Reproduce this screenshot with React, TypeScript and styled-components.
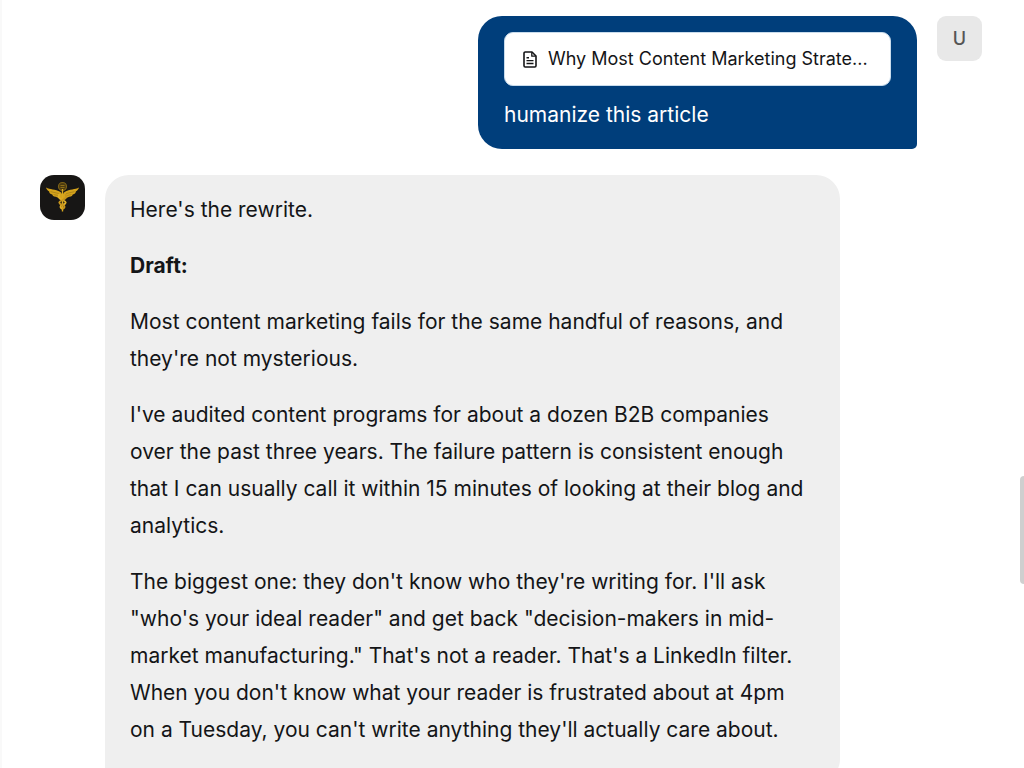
import React from "react";
import styled, { createGlobalStyle } from "styled-components";

const GlobalStyle = createGlobalStyle`
  * { box-sizing: border-box; }
  body {
    margin: 0;
    background: #ffffff;
    color: #141517;
    font-family: Inter, "Liberation Sans", sans-serif;
  }
`;

const Chat = styled.main`
  position: relative;
  display: flex;
  flex-direction: column;
  gap: 26px;
  height: 100vh;
  overflow: hidden;
  padding: 16px 42px 0 38px;
  border-left: 2px solid #f9f9f9;
`;

const Message = styled.article<{ $own?: boolean }>`
  display: flex;
  flex: none;
  align-items: flex-start;
  gap: 20px;
  flex-direction: ${(p) => (p.$own ? "row-reverse" : "row")};
`;

const Avatar = styled.div<{ $dark?: boolean }>`
  display: flex;
  flex: none;
  align-items: center;
  justify-content: center;
  width: 45px;
  height: 45px;
  border-radius: ${(p) => (p.$dark ? 14 : 9)}px;
  background: ${(p) => (p.$dark ? "#171615" : "#e8e8e8")};
  color: #555555;
  font-size: 18px;
  font-weight: 500;
`;

const Bubble = styled.div<{ $own?: boolean }>`
  max-width: ${(p) => (p.$own ? 439 : 735)}px;
  padding: 16px ${(p) => (p.$own ? 26 : 25)}px;
  border-radius: ${(p) => (p.$own ? "24px 24px 5px 24px" : "24px 24px 24px 5px")};
  background: ${(p) => (p.$own ? "#003e7b" : "#efefef")};
  color: ${(p) => (p.$own ? "#ffffff" : "inherit")};
`;

const Attachment = styled.button`
  display: flex;
  align-items: center;
  gap: 11px;
  width: 387px;
  max-width: 100%;
  height: 54px;
  margin: 0 0 10px;
  padding: 0 12px 0 18px;
  border: 1px solid #c9dcec;
  border-radius: 9px;
  background: #ffffff;
  color: #141517;
  font: inherit;
  font-size: 18px;
`;

const FileName = styled.span`
  overflow: hidden;
  line-height: 26px;
  white-space: nowrap;
  text-overflow: ellipsis;
`;

const Text = styled.p<{ $bold?: boolean }>`
  margin: 0;
  font-size: 21px;
  line-height: 37px;
  font-weight: ${(p) => (p.$bold ? 700 : 400)};
`;

const Reply = styled.div`
  display: flex;
  flex-direction: column;
  gap: 19px;
  padding-bottom: 19px;
`;

const ScrollThumb = styled.div`
  position: absolute;
  top: 62%;
  right: -4px;
  width: 8px;
  height: 108px;
  border-radius: 4px;
  background: #cfcfcf;
`;

const DocumentIcon = () => (
  <svg width="14" height="17" viewBox="0 0 14 17" fill="none" stroke="#141517" strokeWidth="1.6" strokeLinejoin="round" aria-hidden="true">
    <path d="M2.2 1H9l4 4v9.8a1.2 1.2 0 0 1-1.2 1.2H2.2A1.2 1.2 0 0 1 1 14.8V2.2A1.2 1.2 0 0 1 2.2 1Z" />
    <path d="M8.8 1.2V5.2H12.8" strokeWidth="1.3" />
    <path d="M3.5 6.7h2.5M3.5 9.6h7M3.5 12.5h7" strokeWidth="1.4" />
  </svg>
);

const Caduceus = () => (
  <svg width="45" height="45" viewBox="0 0 45 45" fill="none" aria-hidden="true">
    <path d="M6 12.500C10 15 15 13.500 20.500 17L22 19V24.500C19.500 22.500 17.500 23 16 21.800C13.500 22 12.500 20.500 12.300 19.500C10 19 9 17.500 9.200 16.500C7.500 15.700 6.500 14 6 12.500Z" fill="#d5a31c" />
    <path d="M39 12.500C35 15 30 13.500 24.500 17L23 19V24.500C25.500 22.500 27.500 23 29 21.800C31.500 22 32.500 20.500 32.700 19.500C35 19 36 17.500 35.800 16.500C37.500 15.700 38.500 14 39 12.500Z" fill="#d5a31c" />
    <path d="M10.500 16.600l8.500 2M13.500 19.600l6 1.100M34.500 16.600l-8.500 2M31.500 19.600l-6 1.100" stroke="#8d6c15" strokeWidth=".5" />
    <circle cx="22.500" cy="11.500" r="4" fill="#4b3a10" stroke="#7d6218" strokeWidth="1.200" />
    <path d="M20.500 10.500h4M20.500 12.500h4" stroke="#a9841e" strokeWidth=".7" />
    <path d="M22.500 14V36.500" stroke="#d9a91f" strokeWidth="1.400" />
    <path d="M19.500 19C17.500 22 19 23.500 22.500 25C27 27 26.500 28.500 22.500 30C19.500 31.200 20 32.500 22.500 34" stroke="#e0b02a" strokeWidth="1.900" />
    <path d="M25.500 19C27.500 22 26 23.500 22.500 25C18 27 18.500 28.500 22.500 30C25.500 31.200 25 32.500 22.500 34" stroke="#c7951b" strokeWidth="1.900" />
  </svg>
);

const paragraphs = [
  "Most content marketing fails for the same handful of reasons, and they're not mysterious.",
  "I've audited content programs for about a dozen B2B companies over the past three years. The failure pattern is consistent enough that I can usually call it within 15 minutes of looking at their blog and analytics.",
  "The biggest one: they don't know who they're writing for. I'll ask \"who's your ideal reader\" and get back \"decision-makers in mid-market manufacturing.\" That's not a reader. That's a LinkedIn filter. When you don't know what your reader is frustrated about at 4pm on a Tuesday, you can't write anything they'll actually care about.",
];

export default function App() {
  return (
    <>
      <GlobalStyle />
      <Chat>
        <Message $own>
          <Avatar>U</Avatar>
          <Bubble $own>
            <Attachment type="button">
              <DocumentIcon />
              <FileName>Why Most Content Marketing Strate...</FileName>
            </Attachment>
            <Text>humanize this article</Text>
          </Bubble>
        </Message>
        <Message>
          <Avatar $dark>
            <Caduceus />
          </Avatar>
          <Bubble>
            <Reply>
              <Text>Here's the rewrite.</Text>
              <Text $bold>Draft:</Text>
              {paragraphs.map((p) => (
                <Text key={p}>{p}</Text>
              ))}
            </Reply>
          </Bubble>
        </Message>
        <ScrollThumb />
      </Chat>
    </>
  );
}
